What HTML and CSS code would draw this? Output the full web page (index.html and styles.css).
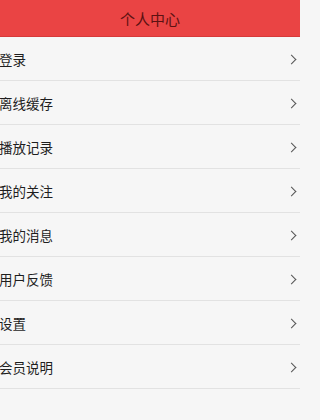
FILE: index.html
```html
<!DOCTYPE html>
<html lang="zh">
<head>
<meta charset="utf-8">
<link rel="stylesheet" href="styles.css">
</head>
<body>
<header class="bar"><h1 class="title">个人中心</h1></header>
<ul class="menu">
  <li class="item"><span class="label">登录</span><span class="chev"></span></li>
  <li class="item"><span class="label">离线缓存</span><span class="chev"></span></li>
  <li class="item"><span class="label">播放记录</span><span class="chev"></span></li>
  <li class="item"><span class="label">我的关注</span><span class="chev"></span></li>
  <li class="item"><span class="label">我的消息</span><span class="chev"></span></li>
  <li class="item"><span class="label">用户反馈</span><span class="chev"></span></li>
  <li class="item"><span class="label">设置</span><span class="chev"></span></li>
  <li class="item"><span class="label">会员说明</span><span class="chev"></span></li>
</ul>
</body>
</html>
```
FILE: styles.css
```css
html {
  background: #f6f6f6;
}
html, body {
  margin: 0;
  padding: 0;
  overflow: hidden;
}
body {
  width: 300px;
  height: 420px;
  background: #f6f6f6;
  font-family: "Noto Sans CJK SC", "Noto Sans", sans-serif;
}
.bar {
  height: 37px;
  background: #ea4444;
  display: flex;
  align-items: center;
  justify-content: center;
  border-bottom: 1px solid #d63a3a;
  box-sizing: border-box;
}
.title {
  margin: 0;
  font-size: 15px;
  font-weight: normal;
  color: #5c1212;
  line-height: 1;
}
.menu {
  list-style: none;
  margin: 0;
  padding: 0;
}
.item {
  height: 44px;
  box-sizing: border-box;
  border-bottom: 1px solid #e2e2e2;
  display: flex;
  align-items: center;
  justify-content: space-between;
  padding: 1px 5px 0 0;
}
.label {
  font-size: 13.5px;
  color: #1e1e1e;
  margin-left: -1px;
}
.chev {
  width: 6px;
  height: 6px;
  border-right: 1.3px solid #555;
  border-top: 1.3px solid #555;
  transform: rotate(45deg);
}
```
